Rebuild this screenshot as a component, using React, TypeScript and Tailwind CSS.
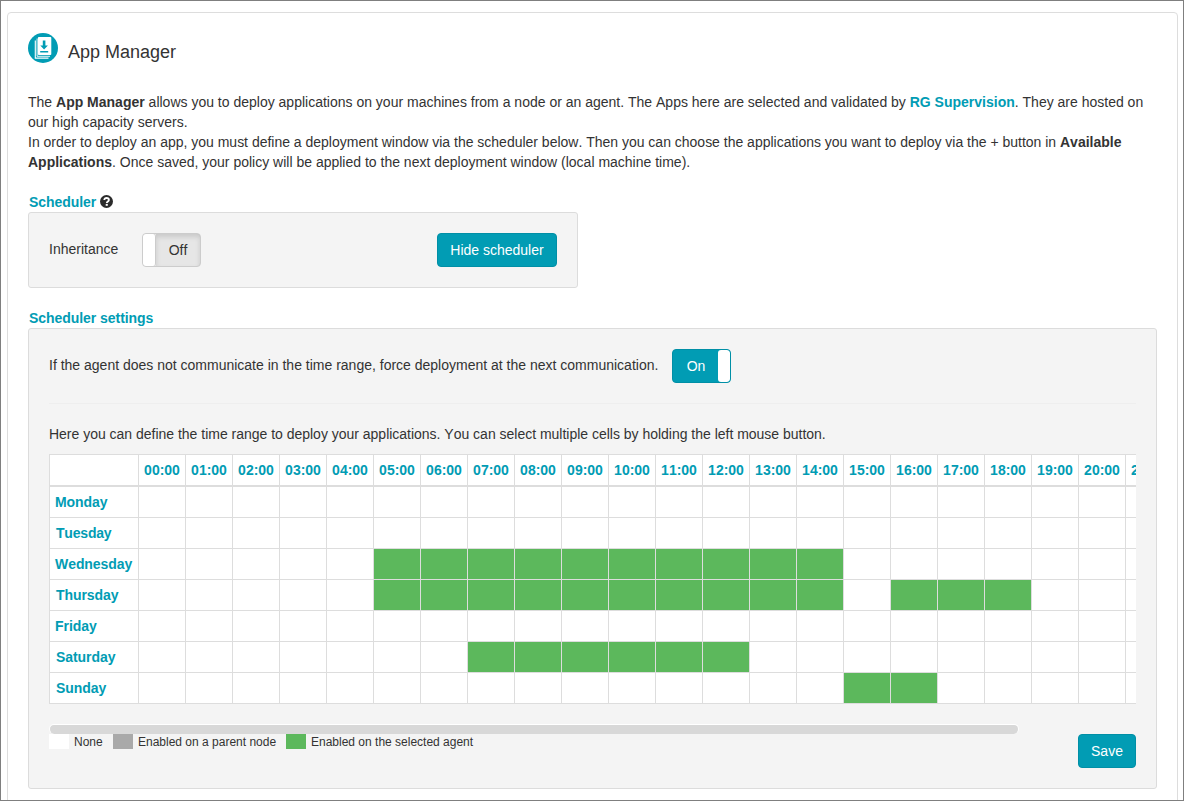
const hours = Array.from({ length: 24 }, (_, h) => `${String(h).padStart(2, "0")}:00`);

const days: { name: string; ranges: [number, number][]; indent: string }[] = [
  { name: "Monday", ranges: [], indent: "pl-[5px]" },
  { name: "Tuesday", ranges: [], indent: "pl-[6px] tracking-[-0.2px]" },
  { name: "Wednesday", ranges: [[5, 14]], indent: "pl-[5px]" },
  { name: "Thursday", ranges: [[5, 14], [16, 18]], indent: "pl-[6px]" },
  { name: "Friday", ranges: [], indent: "pl-[5px]" },
  { name: "Saturday", ranges: [[7, 12]], indent: "pl-[6px]" },
  { name: "Sunday", ranges: [[15, 16]], indent: "pl-[6px]" },
];

function AppIcon() {
  return (
    <svg className="h-[30px] w-[30px] shrink-0" viewBox="0 0 30 30">
      <circle cx="15" cy="15" r="15" fill="#019cb4" />
      <path d="M7.3 7.5v17.6h13.2" fill="none" stroke="#fff" strokeWidth="1.1" />
      <path d="M9.1 5.5v17.8h12.9" fill="none" stroke="#fff" strokeWidth="0.9" />
      <rect x="9.9" y="4" width="13.4" height="18" rx="1" fill="#fff" />
      <path d="M14.8 7.6h2.6v4.8h2.5L16.1 16.4l-3.8-4h2.5zM12.2 18h8v1.6h-8z" fill="#019cb4" />
    </svg>
  );
}

function HelpIcon() {
  return (
    <svg className="relative -top-[1px] h-[13px] w-[13px]" viewBox="0 0 13 13">
      <circle cx="6.5" cy="6.5" r="6.5" fill="#2b2b2b" />
      <path d="M4.3 5.1C4.3 3.7 5.2 3 6.6 3s2.3.8 2.3 1.9c0 1.5-2.1 1.6-2.1 3.1" fill="none" stroke="#fff" strokeWidth="1.8" />
      <path d="M5.7 8.9h2.1v1.9H5.7z" fill="#fff" />
    </svg>
  );
}

export default function App() {
  return (
    <div className="h-[801px] w-[1184px] overflow-hidden border border-[#7f7f7f] bg-white px-[6px] pt-[11px] font-['Liberation_Sans',Arial,sans-serif] text-[14px] leading-5 text-[#333] [font-kerning:none]">
      <main className="h-[820px] w-[1171px] rounded-t border border-[#ddd] pl-5 pt-5">
        <header className="flex h-[59px] items-start gap-[10px]">
          <AppIcon />
          <h1 className="pt-[9px] text-[18px] leading-5">App Manager</h1>
        </header>

        <div className="whitespace-nowrap">
          <p>
            The <b>App Manager</b> allows you to deploy applications on your machines from a node or an agent. The Apps here are selected and validated by <b className="text-[#019cb4]">RG Supervision</b>. They are hosted on
          </p>
          <p>our high capacity servers.</p>
          <p className="tracking-[-0.007px]">
            In order to deploy an app, you must define a deployment window via the scheduler below. Then you can choose the applications you want to deploy via the + button in <b>Available</b>
          </p>
          <p>
            <b>Applications</b>. Once saved, your policy will be applied to the next deployment window (local machine time).
          </p>
        </div>

        <h2 className="mt-5 flex h-5 items-center gap-1 pl-[1px] font-bold tracking-[-0.06px] text-[#019cb4]">
          Scheduler <HelpIcon />
        </h2>
        <section className="flex h-[76px] w-[550px] items-start rounded-[3px] border border-[#dcdcdc] bg-[#f4f4f4] pl-5 pt-5">
          <span className="w-[93px] pt-[6px]">Inheritance</span>
          <button className="flex h-[34px] w-[59px] overflow-hidden rounded border border-[#ccc] bg-[#e6e6e6] text-[#333]">
            <span className="h-8 w-[13px] rounded-[3px] border-r border-[#ccc] bg-white" />
            <span className="h-8 flex-1 pt-[6px] text-center leading-5 shadow-[inset_0_3px_5px_rgba(0,0,0,0.125)]">Off</span>
          </button>
          <button className="ml-[236px] h-[34px] w-[120px] rounded border border-[#008fa6] bg-[#019cb4] text-[14px] text-white">
            Hide scheduler
          </button>
        </section>

        <h2 className="mt-5 h-5 pl-[1px] font-bold tracking-[-0.05px] text-[#019cb4]">Scheduler settings</h2>
        <section className="h-[461px] w-[1129px] rounded-[3px] border border-[#dcdcdc] bg-[#f4f4f4] px-5 pt-5">
          <div className="flex h-[55px] items-start whitespace-nowrap border-b border-[#eee]">
            <span className="w-[623px] pt-[6px]">
              If the agent does not communicate in the time range, force deployment at the next communication.
            </span>
            <button className="flex h-[34px] w-[59px] overflow-hidden rounded border border-[#008fa6] bg-[#019cb4] text-white">
              <span className="h-8 flex-1 pl-[1px] pt-[6px] text-center leading-5">On</span>
              <span className="h-8 w-[12px] rounded-[3px] bg-white" />
            </button>
          </div>
          <p className="mt-5 h-[30px] whitespace-nowrap tracking-[-0.012px]">
            Here you can define the time range to deploy your applications. You can select multiple cells by holding the left mouse button.
          </p>

          <div className="h-[250px] w-[1087px] overflow-hidden">
            <div className="w-[1218px] border-l border-t border-[#ddd] bg-white font-bold tracking-[-0.06px] text-[#019cb4]">
              <div className="flex h-8 border-b-2 border-[#ddd] tracking-normal">
                <div className="w-[89px] shrink-0 border-r border-[#ddd]" />
                {hours.map((h) => (
                  <div key={h} className="w-[47px] shrink-0 border-r border-[#ddd] pt-[5px] text-center">
                    {h}
                  </div>
                ))}
              </div>
              {days.map((day) => (
                <div key={day.name} className="flex h-[31px] border-b border-[#ddd]">
                  <div className={`w-[89px] shrink-0 border-r border-[#ddd] pt-[5px] ${day.indent}`}>{day.name}</div>
                  {hours.map((h, i) => (
                    <div
                      key={h}
                      className={`w-[47px] shrink-0 border-r border-[#ddd] ${
                        day.ranges.some(([a, b]) => i >= a && i <= b) ? "bg-[#5cb85c]" : "bg-white"
                      }`}
                    />
                  ))}
                </div>
              ))}
            </div>
          </div>

          <div className="mt-5 h-[10px] w-[970px] rounded-[5px] border border-b-0 border-white bg-[#d8d8d8]" />
          <div className="flex items-start justify-between">
            <div className="flex h-[15px] text-[12px] leading-4">
              <span className="mr-[5px] h-[15px] w-5 bg-white" />
              <span className="w-[39px]">None</span>
              <span className="mr-[5px] h-[15px] w-5 bg-[#a9a9a9]" />
              <span className="w-[148px]">Enabled on a parent node</span>
              <span className="mr-[5px] h-[15px] w-5 bg-[#5cb85c]" />
              <span>Enabled on the selected agent</span>
            </div>
            <button className="h-[34px] w-[58px] rounded border border-[#008fa6] bg-[#019cb4] text-[14px] text-white">Save</button>
          </div>
        </section>
      </main>
    </div>
  );
}
